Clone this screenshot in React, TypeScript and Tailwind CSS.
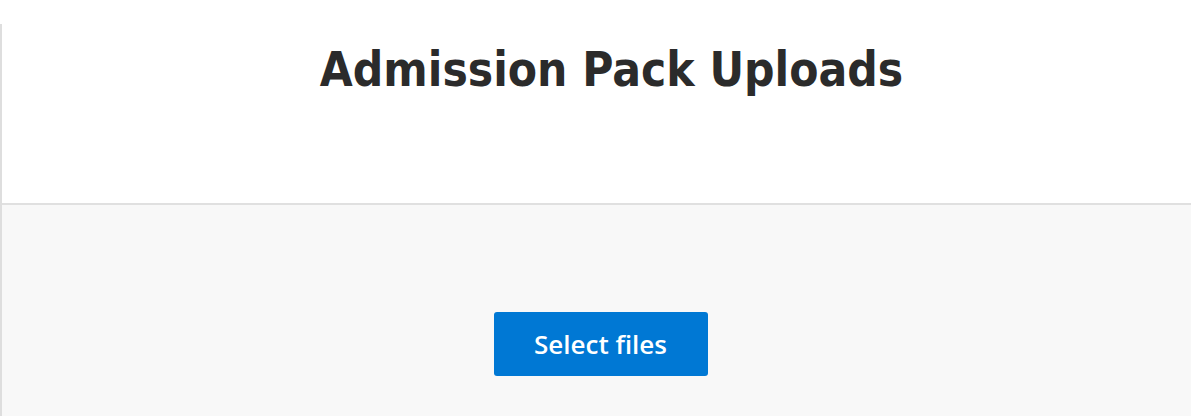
export default function App() {
  return (
    <div className="w-[1191px] h-[416px] bg-white overflow-hidden pt-[24px]">
      <div className="h-[392px] border-l-2 border-[#dedede] flex flex-col">
        <div className="h-[179px] flex justify-center pt-[14px] pl-[30px]">
          <h1
            className="text-[47.4px] font-bold text-[#2b2b2b] leading-[64px]"
            style={{ fontFamily: '"DejaVu Sans Condensed", "DejaVu Sans", Verdana, sans-serif' }}
          >
            Admission Pack Uploads
          </h1>
        </div>
        <div className="flex-1 bg-[#f8f8f8] border-t-2 border-[#e0e0e0] flex justify-center pt-[107px] pl-[8px]">
          <button
            className="w-[214px] h-[64px] bg-[#0078d4] rounded-[3px] text-white text-[26px] font-semibold"
            style={{ fontFamily: '"Open Sans", "Noto Sans", sans-serif' }}
          >
            Select files
          </button>
        </div>
      </div>
    </div>
  );
}
